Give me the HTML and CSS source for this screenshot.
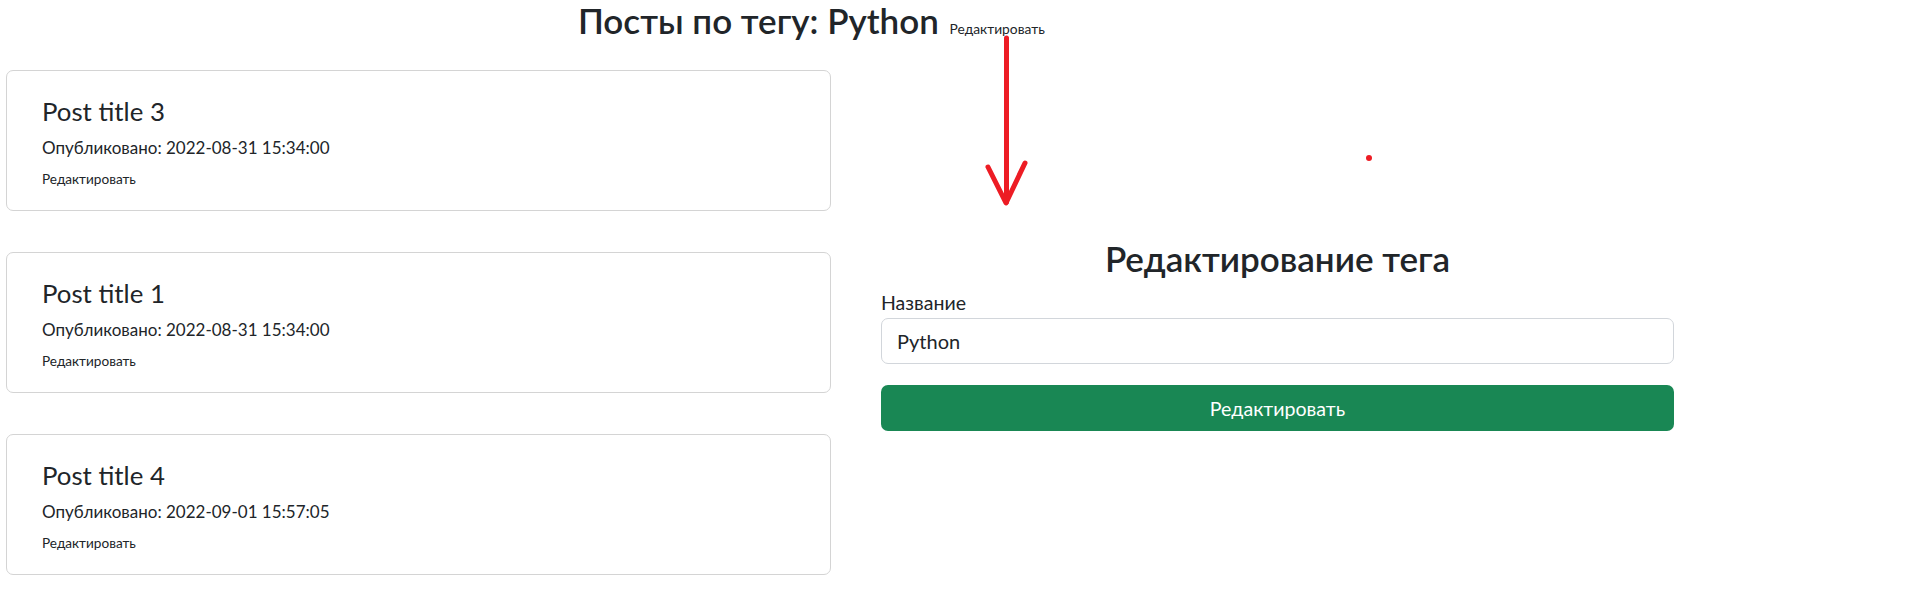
FILE: index.html
```html
<!DOCTYPE html>
<html lang="ru">
<head>
<meta charset="utf-8">
<title>Посты по тегу: Python</title>
<link rel="stylesheet" href="styles.css">
</head>
<body>
<header class="page-header">
  <h2 class="page-title">Посты по тегу: Python <a class="title-link" href="#">Редактировать</a></h2>
</header>
<main class="layout">
  <section class="posts">
    <article class="card">
      <h4 class="card-title">Post title 3</h4>
      <p class="card-meta">Опубликовано: 2022-08-31 15:34:00</p>
      <a class="card-link" href="#">Редактировать</a>
    </article>
    <article class="card">
      <h4 class="card-title">Post title 1</h4>
      <p class="card-meta">Опубликовано: 2022-08-31 15:34:00</p>
      <a class="card-link" href="#">Редактировать</a>
    </article>
    <article class="card">
      <h4 class="card-title">Post title 4</h4>
      <p class="card-meta">Опубликовано: 2022-09-01 15:57:05</p>
      <a class="card-link" href="#">Редактировать</a>
    </article>
  </section>
  <section class="edit">
    <h2 class="edit-title">Редактирование тега</h2>
    <form class="edit-form">
      <label class="form-label" for="tag-name">Название</label>
      <input class="form-control" id="tag-name" type="text" value="Python">
      <button class="btn-success" type="button">Редактировать</button>
    </form>
  </section>
</main>
<svg class="annotation" width="1914" height="591" viewBox="0 0 1914 591" aria-hidden="true">
  <g stroke="#ed1c24" stroke-width="5" stroke-linecap="round" stroke-linejoin="round" fill="none">
    <line x1="1006.5" y1="38" x2="1006.5" y2="202"/>
    <polyline points="988,167 1006,203 1025,163"/>
  </g>
  <circle cx="1369" cy="158" r="3" fill="#ed1c24"/>
</svg>
</body>
</html>
```

FILE: styles.css
```css
* {
  box-sizing: border-box;
}

html, body {
  margin: 0;
  padding: 0;
  background: #ffffff;
}

body {
  position: relative;
  width: 1914px;
  height: 591px;
  overflow: hidden;
  font-family: "Lato", "Open Sans", "Noto Sans", sans-serif;
  color: #212529;
}

.page-header {
  height: 70px;
  padding-left: 578px;
}

.page-title {
  margin: 0;
  font-size: 35px;
  line-height: 40px;
  font-weight: 600;
  white-space: nowrap;
}

.title-link {
  margin-left: 2px;
  font-size: 13.8px;
  font-weight: 400;
  color: #212529;
  text-decoration: none;
}

.layout {
  display: flex;
  align-items: flex-start;
}

.posts {
  width: 825px;
  margin-left: 6px;
  display: flex;
  flex-direction: column;
  gap: 41px;
}

.card {
  display: flex;
  flex-direction: column;
  align-items: flex-start;
  border: 1px solid #d4d4d4;
  border-radius: 7px;
  padding: 24px 35px 21px;
}

.card-title {
  margin: 0;
  font-size: 25.8px;
  line-height: 32px;
  font-weight: 400;
}

.card-meta {
  margin: 9px 0 0;
  font-size: 17px;
  line-height: 24px;
}

.card-link {
  margin-top: 9px;
  font-size: 13.6px;
  line-height: 20px;
  color: #212529;
  text-decoration: none;
}

.edit {
  width: 793px;
  margin-left: 50px;
  padding-top: 168px;
}

.edit-title {
  margin: 0;
  text-align: center;
  font-size: 35px;
  line-height: 40px;
  font-weight: 600;
}

.edit-form {
  display: flex;
  flex-direction: column;
}

.form-label {
  margin-top: 13px;
  font-size: 19.5px;
  line-height: 24px;
}

.form-control {
  margin-top: 3px;
  height: 46px;
  padding: 0 15px;
  border: 1px solid #d2d6db;
  border-radius: 7px;
  font-family: inherit;
  font-size: 20px;
  color: #212529;
  background: #ffffff;
}

.btn-success {
  margin-top: 21px;
  height: 46px;
  border: 0;
  border-radius: 7px;
  background: #198754;
  color: #ffffff;
  font-family: inherit;
  font-size: 19.6px;
}

.annotation {
  position: absolute;
  left: 0;
  top: 0;
  pointer-events: none;
}
```
